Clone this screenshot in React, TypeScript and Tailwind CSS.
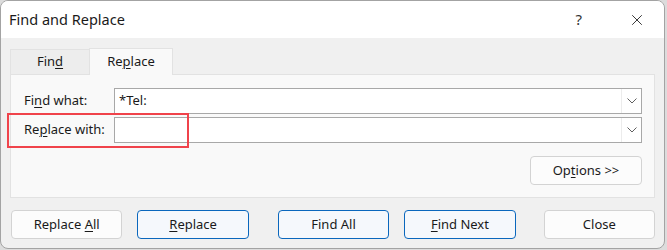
import { X } from 'lucide-react';

const font = { fontFamily: '"Noto Sans", "Segoe UI", sans-serif' };

function U({ children }: { children: string }) {
  return <span className="underline underline-offset-[2px] decoration-[1px]">{children}</span>;
}

function Chevron() {
  return (
    <svg width="10" height="6" viewBox="0 0 10 6" fill="none">
      <path d="M0.5 0.5 L5 5 L9.5 0.5" stroke="#606060" strokeWidth="1" />
    </svg>
  );
}

function Combo({ value }: { value?: string }) {
  return (
    <div className="flex h-[26px] w-[528px] border border-[#a8a8a8] bg-white">
      <div className="flex-1 flex items-center pl-[4px] text-[13px] text-[#1a1a1a]">{value}</div>
      <div className="w-[20px] flex items-center justify-center border-l border-[#ececec] bg-white">
        <Chevron />
      </div>
    </div>
  );
}

function Btn({ children, primary, className = '' }: { children: React.ReactNode; primary?: boolean; className?: string }) {
  return (
    <div
      className={
        'h-[29px] w-[112px] flex items-center justify-center rounded-[4px] text-[13px] text-[#1a1a1a] ' +
        (primary ? 'border border-[#0a67bd] bg-[#f5f8fc] ' : 'border border-[#d3d3d3] bg-[#fcfcfc] ') +
        className
      }
    >
      <span>{children}</span>
    </div>
  );
}

export default function App() {
  return (
    <div className="relative w-[667px] h-[250px] bg-[#dcdcdc]" style={font}>
      <div className="w-[665px] h-[249px] rounded-[8px] border border-[#a3a3a3] bg-[#f0f0f0] overflow-hidden flex flex-col">
        {/* title bar */}
        <div className="h-[37px] bg-white flex items-center pl-[8px] shrink-0">
          <span className="text-[14.5px] text-[#1a1a1a]">Find and Replace</span>
          <span className="ml-auto text-[15px] text-[#333] mr-[46px]">?</span>
          <X className="mr-[18px] text-[#222]" size={18} strokeWidth={1.2} />
        </div>

        <div className="px-[9px] flex flex-col">
          {/* tabs */}
          <div className="flex items-end h-[36px]">
            <div className="h-[25px] w-[79px] flex items-center justify-center border-t border-l border-[#e2e2e2] bg-[#ededed] text-[13px] text-[#1a1a1a]">
              <span>Fin<U>d</U></span>
            </div>
            <div className="h-[27px] w-[84px] flex items-center justify-center border-t border-l border-r border-[#e2e2e2] bg-[#f9f9f9] text-[13px] text-[#1a1a1a] -mb-px relative z-10">
              <span>Re<U>p</U>lace</span>
            </div>
          </div>

          {/* panel */}
          <div className="h-[124px] border border-[#e2e2e2] bg-[#f9f9f9] pt-[13px] pl-[13px] pr-[12px] flex flex-col">
            <div className="flex items-center">
              <span className="w-[90px] text-[13px] text-[#1a1a1a]">
                Fi<U>n</U>d what:
              </span>
              <Combo value="*Tel:" />
            </div>
            <div className="flex items-center mt-[3px]">
              <span className="w-[90px] text-[13px] text-[#1a1a1a]">
                Re<U>p</U>lace with:
              </span>
              <Combo />
            </div>
            <div className="flex justify-end mt-[13px]">
              <Btn className="w-[111px] h-[28px]">
                Op<U>t</U>ions &gt;&gt;
              </Btn>
            </div>
          </div>

          {/* buttons */}
          <div className="flex mt-[12px]">
            <Btn className="ml-px">
              Replace <U>A</U>ll
            </Btn>
            <Btn primary className="ml-[15px]">
              <U>R</U>eplace
            </Btn>
            <Btn primary className="ml-[29px]">
              Find All
            </Btn>
            <Btn primary className="ml-[15px]">
              <U>F</U>ind Next
            </Btn>
            <Btn className="ml-[28px]">Close</Btn>
          </div>
        </div>
      </div>

      {/* annotation highlight */}
      <div className="absolute left-[7px] top-[113px] w-[182px] h-[35px] border-2 border-[#f0434b]" />
    </div>
  );
}
